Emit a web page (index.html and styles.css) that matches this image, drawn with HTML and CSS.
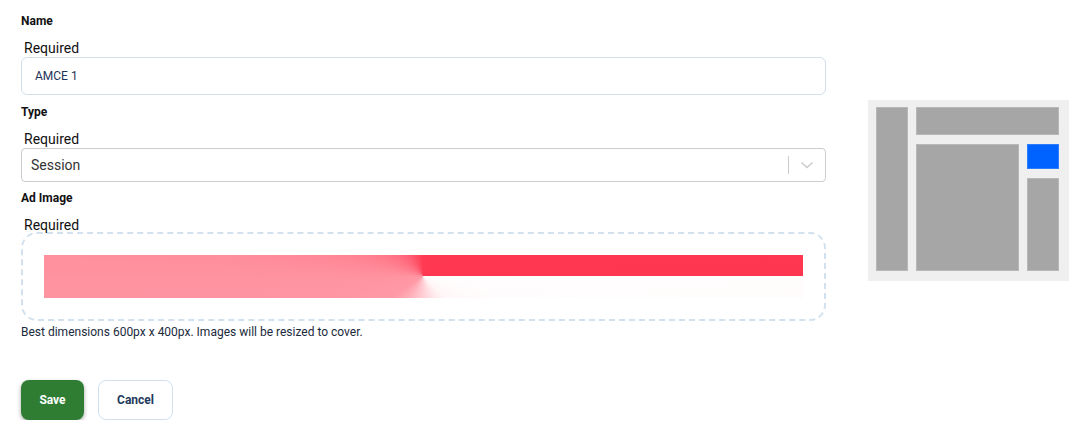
FILE: index.html
```html
<!DOCTYPE html>
<html lang="en">

<head>
    <meta charset="UTF-8">
    <meta name="viewport" content="width=device-width, initial-scale=1.0">
    <title>Ad</title>
    <link rel="stylesheet" href="styles.css">
</head>

<body>
    <div class="page">
        <form class="ad-form">
            <div class="field">
                <div class="label">Name</div>
                <div class="req">Required</div>
                <div class="input">AMCE 1</div>
            </div>

            <div class="field field-select">
                <div class="label">Type</div>
                <div class="req">Required</div>
                <div class="select">
                    <span class="select-value">Session</span>
                    <span class="select-sep"></span>
                    <svg class="select-arrow" width="20" height="20" viewBox="0 0 20 20">
                        <path d="M4.5 7.5 L10 12.5 L15.5 7.5" fill="none" stroke="#cccccc" stroke-width="1.6" />
                    </svg>
                </div>
            </div>

            <div class="field">
                <div class="label">Ad Image</div>
                <div class="req">Required</div>
                <div class="dropzone">
                    <div class="ad-image"></div>
                </div>
                <p class="hint">Best dimensions 600px x 400px. Images will be resized to cover.</p>
            </div>

            <div class="actions">
                <button type="button" class="btn btn-save">Save</button>
                <button type="button" class="btn btn-cancel">Cancel</button>
            </div>
        </form>

        <div class="preview">
            <div class="pv pv-side"></div>
            <div class="pv pv-top"></div>
            <div class="pv pv-main"></div>
            <div class="pv pv-ad"></div>
            <div class="pv pv-right"></div>
        </div>
    </div>
</body>

</html>
```

FILE: styles.css
```css
* {
    margin: 0;
    padding: 0;
    box-sizing: border-box;
}

body {
    background: #fff;
    font-family: Roboto, "Liberation Sans", sans-serif;
    color: #111;
}

.page {
    display: flex;
    align-items: flex-start;
    gap: 42px;
    padding: 13px 0 0 21px;
}

.ad-form {
    width: 805px;
}

.field {
    margin-bottom: 9px;
}

.field-select {
    margin-bottom: 8px;
}

.label {
    font-size: 12px;
    font-weight: 700;
    line-height: 16px;
    color: #111;
    margin-bottom: 11px;
}

.req {
    font-size: 14px;
    line-height: 16px;
    margin-left: 3px;
    margin-bottom: 1px;
    color: #111;
}

.input {
    height: 38px;
    border: 1px solid #d2deea;
    border-radius: 6px;
    padding-left: 13px;
    font-size: 12px;
    line-height: 36px;
    color: #1d3557;
}

.select {
    display: flex;
    align-items: center;
    height: 34px;
    border: 1px solid #cccccc;
    border-radius: 4px;
    padding-left: 9px;
}

.select-value {
    flex: 1;
    font-size: 14px;
    color: #333;
}

.select-sep {
    width: 1px;
    height: 18px;
    background: #cccccc;
}

.select-arrow {
    margin: 0 8px;
}

.dropzone {
    margin-top: -2px;
    border: 2px dashed #d3e1ee;
    border-radius: 16px;
    padding: 21px;
}

.ad-image {
    height: 43px;
    background: conic-gradient(from 0deg at 379px 21px,
            #ff3a52 0deg,
            #ff3650 90deg,
            #ffffff 90deg,
            #fff6f7 135deg,
            #ffc6cd 190deg,
            #ff99a6 235deg,
            #ff94a1 268deg,
            #ff6478 320deg,
            #ff3a52 360deg);
    position: relative;
}

.ad-image::after {
    content: "";
    position: absolute;
    right: 0;
    bottom: 0;
    width: 50%;
    height: 22px;
    background: linear-gradient(to right, rgba(255, 255, 255, 0), rgba(255, 250, 250, 0.6));
}

.hint {
    font-size: 12px;
    line-height: 14px;
    margin-top: 4px;
    color: #1b2a3c;
}

.actions {
    display: flex;
    gap: 14px;
    margin-top: 41px;
}

.btn {
    height: 40px;
    border-radius: 8px;
    font-family: Roboto, "Liberation Sans", sans-serif;
    font-size: 12px;
    font-weight: 700;
    cursor: pointer;
}

.btn-save {
    width: 63px;
    background: #2e7d32;
    color: #fff;
    border: none;
    box-shadow: 0 2px 4px rgba(0, 0, 0, 0.35);
}

.btn-cancel {
    width: 75px;
    background: #fff;
    color: #1e3a5c;
    border: 1px solid #cfe0f0;
}

.preview {
    margin-top: 87px;
    width: 201px;
    height: 181px;
    background: #efefef;
    padding: 7px 10px 10px 8px;
    display: grid;
    grid-template-columns: 32px 103px 32px;
    grid-template-rows: 28px 25px 1fr;
    column-gap: 8px;
    row-gap: 9px;
}

.pv {
    background: #a6a6a6;
    border: 1px solid #b8b8b8;
}

.pv-side {
    grid-column: 1;
    grid-row: 1 / 4;
}

.pv-top {
    grid-column: 2 / 4;
    grid-row: 1;
}

.pv-main {
    grid-column: 2;
    grid-row: 2 / 4;
}

.pv-ad {
    grid-column: 3;
    grid-row: 2;
    background: #0062ff;
    border-color: #2f7dff;
}

.pv-right {
    grid-column: 3;
    grid-row: 3;
}
```
